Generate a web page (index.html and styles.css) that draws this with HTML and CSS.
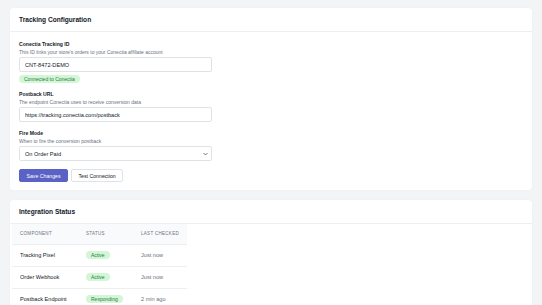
FILE: index.html
```html
<!DOCTYPE html>
<html lang="en">
<head>
    <meta charset="UTF-8">
    <meta name="viewport" content="width=device-width, initial-scale=1.0">
    <title>Conectia Settings</title>
    <link rel="stylesheet" href="styles.css">
</head>
<body>
    <!-- Tracking configuration card -->
    <div class="card">
        <div class="card-header">
            <h2>Tracking Configuration</h2>
        </div>
        <div class="card-body">
            <div class="field">
                <label for="tracking-id">Conectia Tracking ID</label>
                <p class="help">This ID links your store's orders to your Conectia affiliate account</p>
                <input type="text" id="tracking-id" value="CNT-8472-DEMO">
                <div class="badge-row"><span class="badge">Connected to Conectia</span></div>
            </div>
            <div class="field">
                <label for="postback-url">Postback URL</label>
                <p class="help">The endpoint Conectia uses to receive conversion data</p>
                <input type="text" id="postback-url" value="https://tracking.conectia.com/postback">
            </div>
            <div class="field">
                <label for="fire-mode">Fire Mode</label>
                <p class="help">When to fire the conversion postback</p>
                <div class="select-wrap">
                    <select id="fire-mode">
                        <option>On Order Paid</option>
                        <option>On Order Created</option>
                        <option>On Fulfillment</option>
                    </select>
                    <svg class="chevron" width="5" height="4" viewBox="0 0 10 6">
                        <path d="M1 1l4 4 4-4" fill="none" stroke="#555" stroke-width="1.6"/>
                    </svg>
                </div>
            </div>
            <div class="actions">
                <button class="btn btn-primary">Save Changes</button>
                <button class="btn">Test Connection</button>
            </div>
        </div>
    </div>

    <!-- Integration status card -->
    <div class="card">
        <div class="card-header">
            <h2>Integration Status</h2>
        </div>
        <div class="table-wrap">
            <table class="status-table">
                <thead>
                    <tr>
                        <th class="col-component">Component</th>
                        <th class="col-status">Status</th>
                        <th class="col-checked">Last Checked</th>
                    </tr>
                </thead>
                <tbody>
                    <tr>
                        <td class="name">Tracking Pixel</td>
                        <td><span class="badge">Active</span></td>
                        <td class="muted">Just now</td>
                    </tr>
                    <tr>
                        <td class="name">Order Webhook</td>
                        <td><span class="badge">Active</span></td>
                        <td class="muted">Just now</td>
                    </tr>
                    <tr>
                        <td class="name">Postback Endpoint</td>
                        <td><span class="badge">Responding</span></td>
                        <td class="muted">2 min ago</td>
                    </tr>
                </tbody>
            </table>
        </div>
    </div>
</body>
</html>
```

FILE: styles.css
```css
html, body {
    margin: 0;
    font-family: "Liberation Sans", Arial, sans-serif;
    background-color: #f3f4f6;
    color: #1f2937;
}
body {
    padding: 8px 10px;
}
.card {
    background-color: #fff;
    border-radius: 3px;
    box-shadow: 0 0 1px rgba(0, 0, 0, 0.08);
    margin-bottom: 10px;
}
.card-header {
    height: 23px;
    display: flex;
    align-items: center;
    padding: 0 9px;
    border-bottom: 1px solid #eceef1;
}
.card-header h2 {
    margin: 0;
    font-size: 6.6px;
    font-weight: bold;
    color: #111827;
}
.card-body {
    padding: 9px 9px 8px;
}
.field {
    margin-bottom: 8px;
}
.field label {
    display: block;
    font-size: 5.1px;
    font-weight: bold;
    line-height: 7px;
    margin-bottom: 1px;
    color: #111827;
}
.help {
    margin: 0 0 2px;
    font-size: 5px;
    line-height: 6px;
    color: #6b7280;
}
.field input,
.field select {
    display: block;
    box-sizing: border-box;
    width: 193px;
    height: 15px;
    padding: 0 5px;
    border: 1px solid #dfe2e6;
    border-radius: 2px;
    background-color: #fff;
    font-family: inherit;
    font-size: 5.6px;
    color: #111827;
    outline: none;
}
.field select {
    appearance: none;
    -webkit-appearance: none;
}
.select-wrap {
    position: relative;
    width: 193px;
}
.chevron {
    position: absolute;
    right: 4px;
    top: 6px;
}
.badge-row {
    display: flex;
    margin-top: 3px;
}
.badge {
    display: inline-block;
    padding: 0 5px;
    height: 8px;
    line-height: 8px;
    border-radius: 4px;
    background-color: #d3f6d6;
    color: #27803f;
    font-size: 5px;
    font-weight: 500;
}
.actions {
    display: flex;
    gap: 3px;
}
.btn {
    height: 13px;
    padding: 0 6.5px;
    border: 1px solid #dfe2e6;
    border-radius: 2px;
    background-color: #fff;
    font-family: inherit;
    font-size: 5.2px;
    color: #111827;
}
.btn-primary {
    background-color: #5a62c6;
    border-color: #5a62c6;
    color: #fff;
}
.table-wrap {
    padding: 0 2px 4px;
}
.status-table {
    border-collapse: collapse;
    table-layout: fixed;
    width: 175px;
    font-size: 5.6px;
    line-height: 8px;
}
.col-component {
    width: 66px;
}
.col-status {
    width: 55px;
}
.col-checked {
    width: 54px;
}
.status-table th {
    box-sizing: border-box;
    height: 20px;
    padding: 0 8px;
    background-color: #f9fafb;
    text-align: left;
    font-size: 4.5px;
    font-weight: normal;
    letter-spacing: 0.3px;
    text-transform: uppercase;
    white-space: nowrap;
    color: #6b7280;
    border-bottom: 1px solid #eceef1;
}
.status-table td {
    height: 21px;
    padding: 0 8px;
    border-bottom: 1px solid #eceef1;
    white-space: nowrap;
}
.status-table .name {
    font-weight: 500;
    color: #111827;
}
.status-table .muted {
    color: #6b7280;
}
```
